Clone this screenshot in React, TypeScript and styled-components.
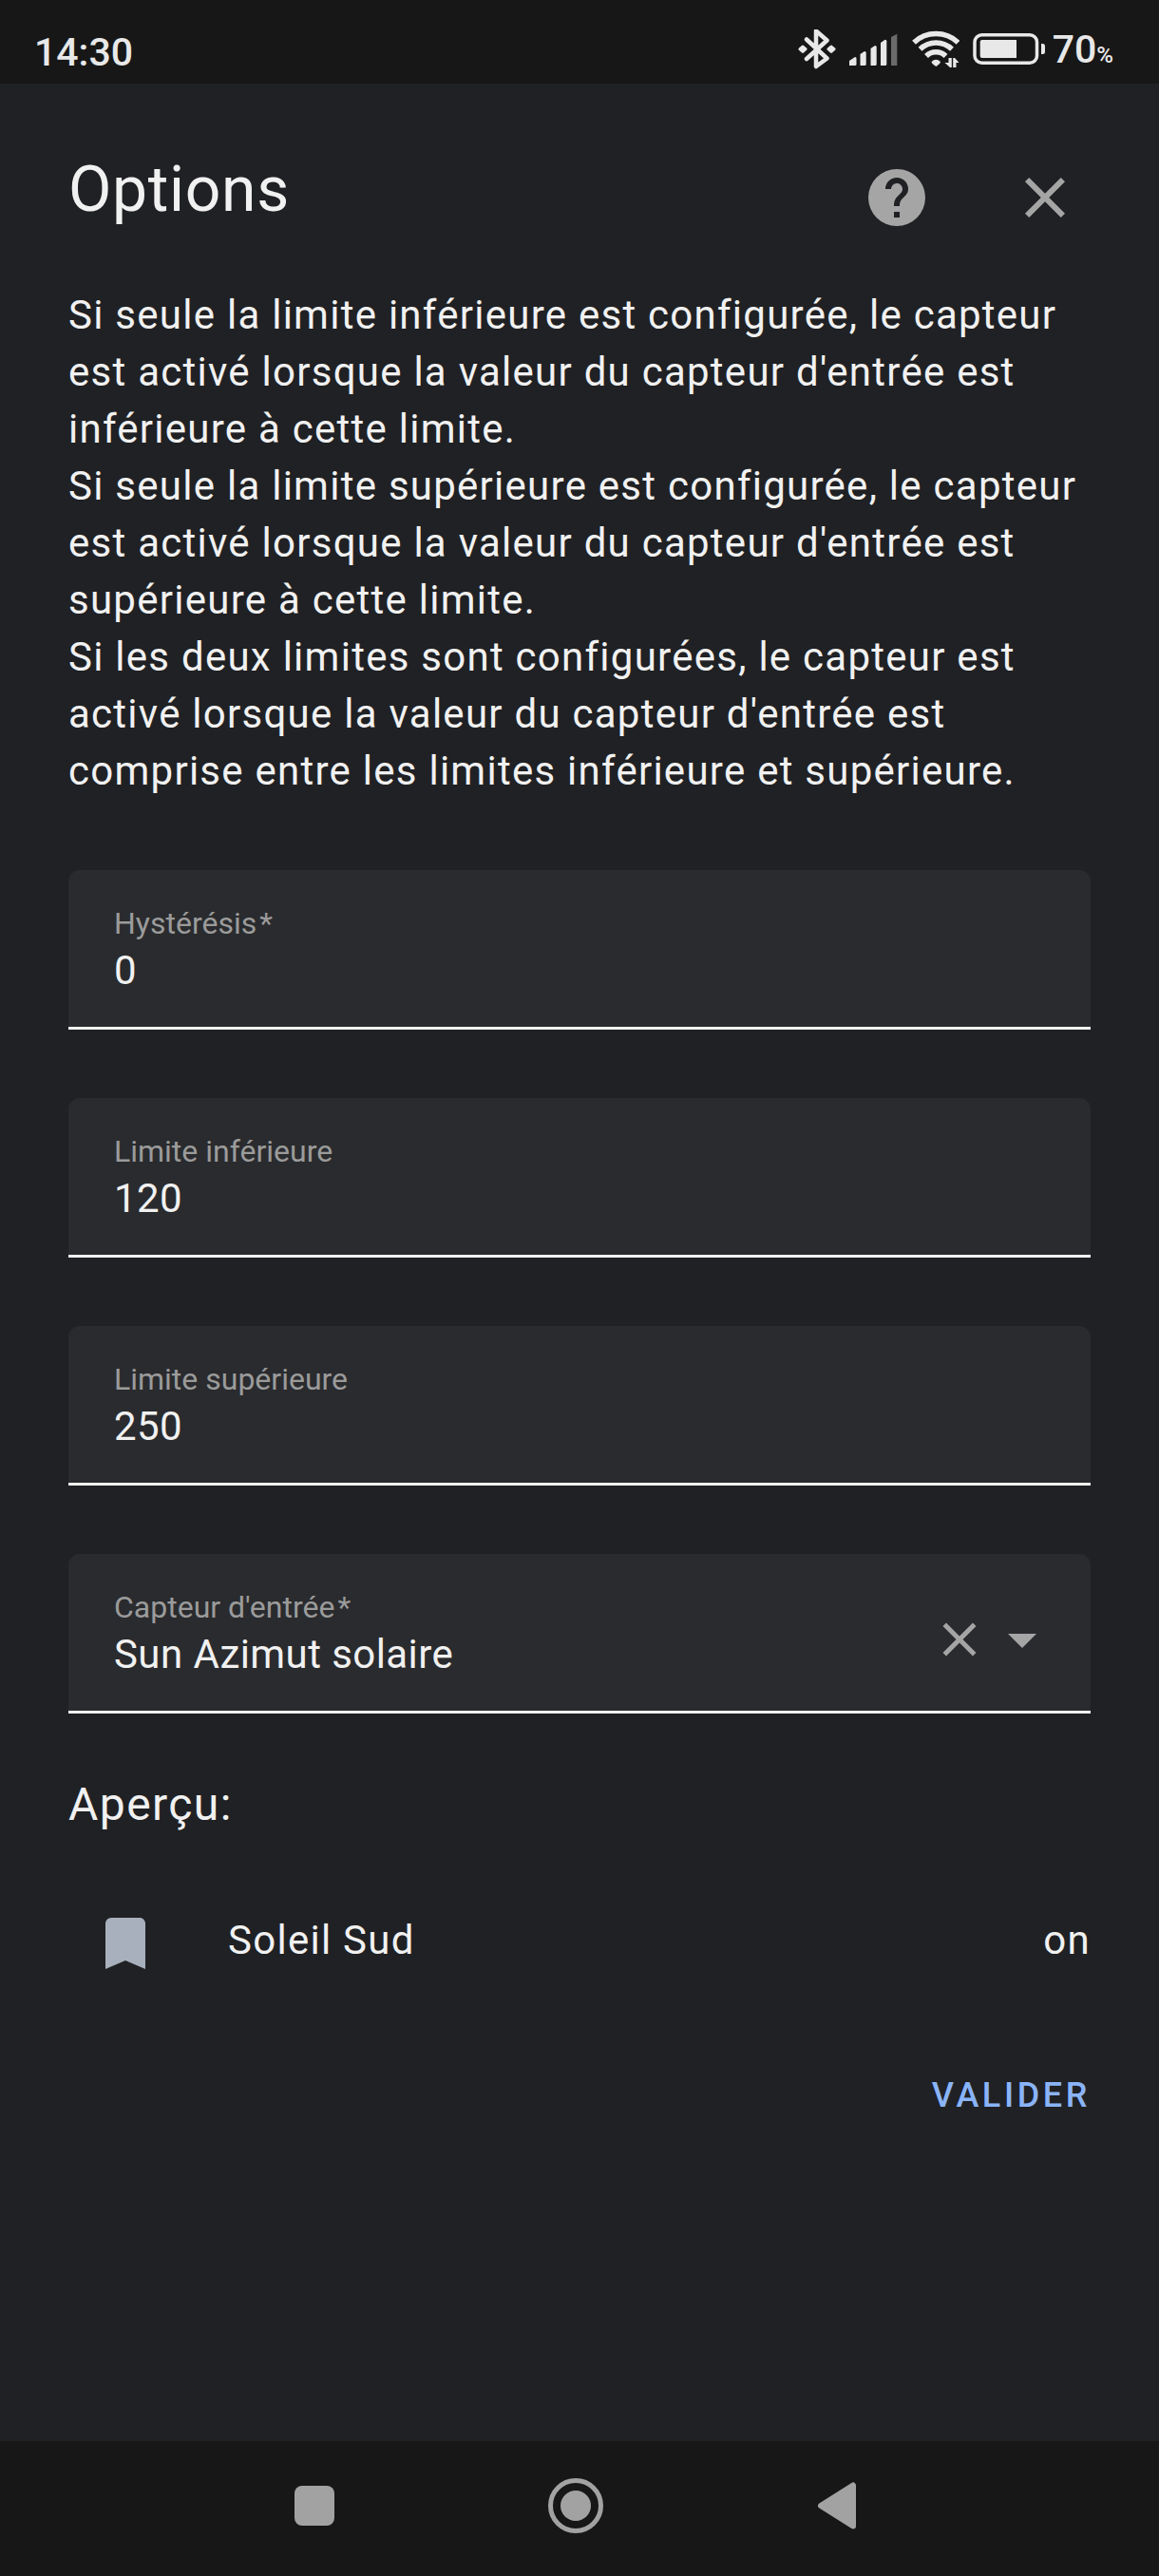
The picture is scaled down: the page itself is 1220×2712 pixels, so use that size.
import React, { useState } from "react";
import styled, { createGlobalStyle } from "styled-components";

const color = {
  system: "#171717",
  surface: "#202124",
  field: "#2a2b2e",
  text: "#f1f1f1",
  status: "#e8e8e8",
  muted: "#9b9b9b",
  icon: "#a5a5a5",
  entity: "#a9b0bd",
  accent: "#8ab4f8",
};

const tracking = {
  body: "0.03em",
  field: "0.01em",
  button: "0.1em",
};

const GlobalStyle = createGlobalStyle`
  *, *::before, *::after { box-sizing: border-box; }
  html { background: ${color.surface}; }
  body { margin: 0; }
  body, button, input, select { font-family: Roboto, "Noto Sans", sans-serif; }
  p, h1, h2 { margin: 0; font-weight: 400; }
  svg { display: block; flex: none; }
`;

const Screen = styled.div`
  display: flex;
  flex-direction: column;
  min-height: 100vh;
  background: ${color.surface};
  color: ${color.text};
`;

const StatusBar = styled.div`
  display: flex;
  align-items: center;
  justify-content: space-between;
  height: 88px;
  padding: 22px 48px 0 36px;
  background: ${color.system};
  color: ${color.status};
  font-size: 41px;
  font-weight: 500;
  line-height: 48px;
`;

const StatusIcons = styled.div`
  display: flex;
  align-items: center;
  gap: 14px;
`;

const BatteryLevel = styled.div`
  display: flex;
  align-items: center;
  gap: 8px;
`;

const Percent = styled.span`
  font-size: 24px;
`;

const Dialog = styled.main`
  flex: 1;
  display: flex;
  flex-direction: column;
  padding-top: 48px;
`;

const DialogHeader = styled.header`
  display: flex;
  align-items: flex-start;
  gap: 12px;
  padding: 0 48px 0 72px;
`;

const Title = styled.h1`
  flex: 1;
  padding-top: 24px;
  font-size: 66px;
  line-height: 80px;
  letter-spacing: ${tracking.field};
`;

const IconButton = styled.button<{ $size: number }>`
  display: flex;
  align-items: center;
  justify-content: center;
  width: ${(p) => p.$size}px;
  height: ${(p) => p.$size}px;
  padding: 0;
  border: 0;
  background: none;
  color: ${color.icon};
  cursor: pointer;
`;

const Form = styled.form`
  display: flex;
  flex-direction: column;
  padding: 22px 72px 72px;
`;

const Description = styled.div`
  font-size: 42px;
  line-height: 60px;
  letter-spacing: ${tracking.body};
`;

const Fields = styled.div`
  display: flex;
  flex-direction: column;
  gap: 72px;
  padding: 74px 0 60px;
`;

const FieldBox = styled.div`
  display: flex;
  height: 168px;
  padding: 36px 36px 0 48px;
  border-bottom: 3px solid ${color.text};
  border-radius: 12px 12px 0 0;
  background: ${color.field};
`;

const FieldText = styled.div`
  flex: 1;
  display: flex;
  flex-direction: column;
`;

const Label = styled.label`
  color: ${color.muted};
  font-size: 32px;
  line-height: 40px;
`;

const RequiredMark = styled.span`
  padding-left: 3px;
`;

const TextInput = styled.input`
  height: 60px;
  padding: 0;
  border: 0;
  outline: 0;
  background: none;
  color: ${color.text};
  font-size: 42px;
  line-height: 60px;
  letter-spacing: ${tracking.field};
`;

const Select = styled.select`
  height: 60px;
  padding: 0;
  border: 0;
  outline: 0;
  appearance: none;
  background: none;
  color: ${color.text};
  font-size: 42px;
  line-height: 60px;
  letter-spacing: ${tracking.field};
`;

const FieldIcons = styled.div`
  display: flex;
  align-items: center;
  height: 108px;
  color: ${color.icon};
`;

const PreviewTitle = styled.h2`
  font-size: 48px;
  line-height: 72px;
  letter-spacing: ${tracking.body};
`;

const EntityRow = styled.div`
  display: flex;
  align-items: center;
  gap: 48px;
  margin-top: 50px;
  font-size: 42px;
  line-height: 60px;
  letter-spacing: ${tracking.body};
`;

const EntityIcon = styled.span`
  display: flex;
  align-items: center;
  justify-content: center;
  width: 120px;
  height: 120px;
  color: ${color.entity};
`;

const EntityName = styled.span`
  flex: 1;
  padding-bottom: 6px;
`;

const EntityState = styled.span`
  padding-bottom: 6px;
`;

const Actions = styled.div`
  display: flex;
  justify-content: flex-end;
  padding-top: 46px;
`;

const SubmitButton = styled.button`
  height: 108px;
  padding: 0;
  border: 0;
  background: none;
  color: ${color.accent};
  font-size: 36px;
  font-weight: 500;
  letter-spacing: ${tracking.button};
  text-transform: uppercase;
  cursor: pointer;
`;

const NavBar = styled.nav`
  display: flex;
  justify-content: center;
  height: 142px;
  padding: 0 8px 6px 0;
  background: ${color.system};
`;

const NavButton = styled.button`
  display: flex;
  align-items: center;
  justify-content: center;
  width: 275px;
  padding: 0;
  border: 0;
  background: none;
  color: #a2a2a2;
  cursor: pointer;
`;

const MdiIcon = ({ path, size = 72 }: { path: string; size?: number }) => (
  <svg width={size} height={size} viewBox="0 0 24 24" fill="currentColor" aria-hidden="true">
    <path d={path} />
  </svg>
);

const mdiHelpCircle =
  "M15.07,11.25L14.17,12.17C13.45,12.89 13,13.5 13,15H11V14.5C11,13.39 11.45,12.39 12.17,11.67L13.41,10.41C13.78,10.05 14,9.55 14,9C14,7.89 13.1,7 12,7A2,2 0 0,0 10,9H8A4,4 0 0,1 12,5A4,4 0 0,1 16,9C16,9.88 15.64,10.67 15.07,11.25M13,19H11V17H13M12,2A10,10 0 0,0 2,12A10,10 0 0,0 12,22A10,10 0 0,0 22,12C22,6.47 17.5,2 12,2Z";
const mdiClose =
  "M19,6.41L17.59,5L12,10.59L6.41,5L5,6.41L10.59,12L5,17.59L6.41,19L12,13.41L17.59,19L19,17.59L13.41,12L19,6.41Z";
const mdiMenuDown = "M7,10L12,15L17,10H7Z";
const mdiBookmark = "M17,3H7A2,2 0 0,0 5,5V21L12,18L19,21V5C19,3.89 18.1,3 17,3Z";

const BluetoothIcon = () => (
  <svg width="40" height="48" viewBox="0 1 40 48" fill="none" aria-label="Bluetooth">
    <path
      d="M9 11.5 L30.5 31.5 L19 40 V2.5 L30.5 12.5 L9 32"
      stroke="currentColor"
      strokeWidth="4.5"
      strokeLinecap="round"
      strokeLinejoin="round"
    />
    <path
      d="M5 19 L8 21.7 L5 24.5 L2 21.7 Z M35 19 L38 21.7 L35 24.5 L32 21.7 Z"
      fill="currentColor"
      stroke="currentColor"
      strokeWidth="3"
      strokeLinejoin="round"
    />
  </svg>
);

const SignalIcon = () => (
  <svg width="52" height="48" viewBox="0 1 52 48" fill="currentColor" aria-label="Réseau">
    <path d="M0 39 V34 L6 30 Q7.5 30 7.5 31.5 V37.5 Q7.5 39 6 39 Z" />
    <path d="M11.5 39 V27 L16 24 Q17.7 24 17.7 25.5 V37.5 Q17.7 39 16.2 39 Z" />
    <path d="M22.5 39 V21 L27 18 Q28.7 18 28.7 19.5 V37.5 Q28.7 39 27.2 39 Z" />
    <path d="M33 39 V15 L37.6 11.7 Q39.3 11.7 39.3 13.2 V37.5 Q39.3 39 37.8 39 Z" />
    <path d="M44 39 V9 L50.3 5.7 V39 Z" opacity="0.4" />
  </svg>
);

const WifiIcon = () => (
  <svg width="50" height="48" viewBox="0 1 50 48" fill="none" aria-label="Wi-Fi">
    <g stroke="currentColor" strokeWidth="5.5">
      <path d="M2 14.8 A34 34 0 0 1 48.5 14.8" />
      <path d="M8.5 21.8 A24 24 0 0 1 42 21.8" />
      <path d="M15 29 A14.5 14.5 0 0 1 35.5 29" />
    </g>
    <path d="M20.5 35 Q25.3 30.5 30 35 Q30 37 25.3 40 Q20.5 37 20.5 35 Z" fill="currentColor" />
    <path d="M38.5 31 H41.8 V41 H40 L34.5 36 H38.5 Z M43.2 41 V31 H45 L49.5 36 H46.5 V41 Z" fill="currentColor" />
  </svg>
);

const BatteryIcon = () => (
  <svg width="76" height="48" viewBox="0 1 76 48" fill="none" aria-label="Batterie">
    <rect x="2" y="6.7" width="65.5" height="29.6" rx="7.5" stroke="currentColor" strokeWidth="3.5" />
    <path d="M9.7 12 H46 V31 H9.7 Q7.7 31 7.7 29 V14 Q7.7 12 9.7 12 Z" fill="currentColor" />
    <path d="M72 16 H73.5 Q76 16 76 18.5 V24.5 Q76 27 73.5 27 H72 Z" fill="currentColor" />
  </svg>
);

const numberFields = [
  { id: "hysteresis", label: "Hystérésis", initial: "0", required: true },
  { id: "lower", label: "Limite inférieure", initial: "120", required: false },
  { id: "upper", label: "Limite supérieure", initial: "250", required: false },
];

const paragraphs = [
  "Si seule la limite inférieure est configurée, le capteur est activé lorsque la valeur du capteur d'entrée est inférieure à cette limite.",
  "Si seule la limite supérieure est configurée, le capteur est activé lorsque la valeur du capteur d'entrée est supérieure à cette limite.",
  "Si les deux limites sont configurées, le capteur est activé lorsque la valeur du capteur d'entrée est comprise entre les limites inférieure et supérieure.",
];

type NumberFieldProps = { id: string; label: string; initial: string; required: boolean };

function NumberField({ id, label, initial, required }: NumberFieldProps) {
  const [value, setValue] = useState(initial);
  return (
    <FieldBox>
      <FieldText>
        <Label htmlFor={id}>
          {label}
          {required && <RequiredMark>*</RequiredMark>}
        </Label>
        <TextInput
          id={id}
          inputMode="decimal"
          required={required}
          value={value}
          onChange={(e) => setValue(e.target.value)}
        />
      </FieldText>
    </FieldBox>
  );
}

function SensorField() {
  const [value, setValue] = useState("sun");
  return (
    <FieldBox>
      <FieldText>
        <Label htmlFor="sensor">
          Capteur d'entrée<RequiredMark>*</RequiredMark>
        </Label>
        <Select id="sensor" required value={value} onChange={(e) => setValue(e.target.value)}>
          <option value="" />
          <option value="sun">Sun Azimut solaire</option>
        </Select>
      </FieldText>
      <FieldIcons>
        <IconButton $size={60} type="button" aria-label="Effacer" onClick={() => setValue("")}>
          <MdiIcon path={mdiClose} size={60} />
        </IconButton>
        <MdiIcon path={mdiMenuDown} />
      </FieldIcons>
    </FieldBox>
  );
}

export default function App() {
  return (
    <Screen>
      <GlobalStyle />
      <StatusBar>
        <span>14:30</span>
        <StatusIcons>
          <BluetoothIcon />
          <SignalIcon />
          <WifiIcon />
          <BatteryLevel>
            <BatteryIcon />
            <span>
              70<Percent>%</Percent>
            </span>
          </BatteryLevel>
        </StatusIcons>
      </StatusBar>

      <Dialog>
        <DialogHeader>
          <Title>Options</Title>
          <IconButton $size={144} type="button" aria-label="Aide">
            <MdiIcon path={mdiHelpCircle} />
          </IconButton>
          <IconButton $size={144} type="button" aria-label="Fermer">
            <MdiIcon path={mdiClose} />
          </IconButton>
        </DialogHeader>

        <Form onSubmit={(e) => e.preventDefault()}>
          <Description>
            {paragraphs.map((text) => (
              <p key={text}>{text}</p>
            ))}
          </Description>

          <Fields>
            {numberFields.map((field) => (
              <NumberField key={field.id} {...field} />
            ))}
            <SensorField />
          </Fields>

          <PreviewTitle>Aperçu:</PreviewTitle>
          <EntityRow>
            <EntityIcon>
              <MdiIcon path={mdiBookmark} />
            </EntityIcon>
            <EntityName>Soleil Sud</EntityName>
            <EntityState>on</EntityState>
          </EntityRow>

          <Actions>
            <SubmitButton type="submit">Valider</SubmitButton>
          </Actions>
        </Form>
      </Dialog>

      <NavBar>
        <NavButton type="button" aria-label="Applications récentes">
          <svg width="42" height="42" viewBox="0 0 42 42" fill="currentColor">
            <rect width="42" height="42" rx="8" />
          </svg>
        </NavButton>
        <NavButton type="button" aria-label="Accueil">
          <svg width="58" height="58" viewBox="0 0 58 58" fill="none">
            <circle cx="29" cy="29" r="26.5" stroke="currentColor" strokeWidth="5" />
            <circle cx="29" cy="29" r="16" fill="currentColor" />
          </svg>
        </NavButton>
        <NavButton type="button" aria-label="Retour">
          <svg width="40" height="50" viewBox="0 0 40 50" fill="currentColor">
            <path
              d="M3 25 L37 3.5 V46.5 Z"
              stroke="currentColor"
              strokeWidth="6"
              strokeLinejoin="round"
            />
          </svg>
        </NavButton>
      </NavBar>
    </Screen>
  );
}
